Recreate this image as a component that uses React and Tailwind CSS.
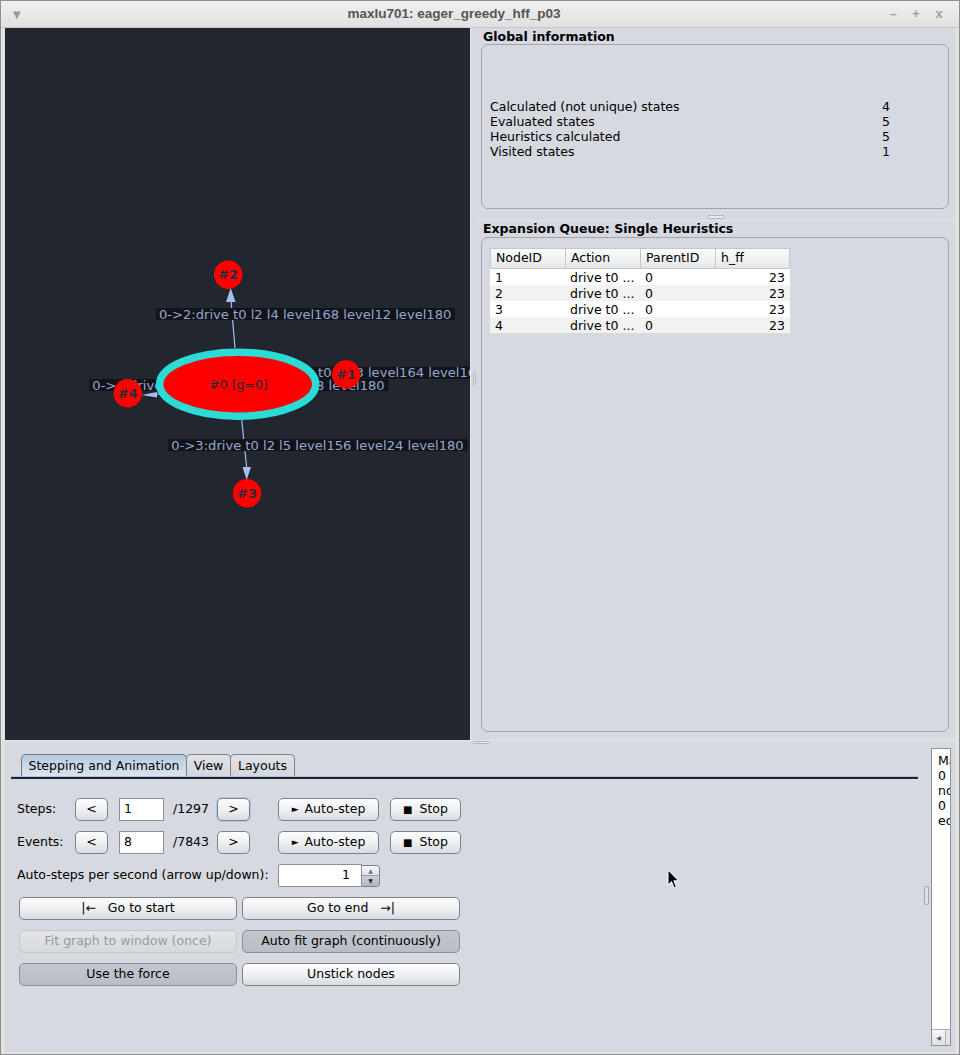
import React from "react";

const BTN =
  "flex items-center justify-center h-[23px] rounded-[5px] border border-[#7d8188] bg-linear-to-b from-[#fdfdfd] via-[#eef0f2] to-[#d8dbe0] text-[12.5px] text-black whitespace-pre shrink-0";
const BTN_TOGGLED =
  "flex items-center justify-center h-[23px] rounded-[5px] border border-[#8a8e95] bg-linear-to-b from-[#c3c7cd] to-[#b9bdc4] text-[12.5px] text-black whitespace-pre shrink-0";
const BTN_DISABLED =
  "flex items-center justify-center h-[23px] rounded-[5px] border border-[#c2c5ca] bg-linear-to-b from-[#e2e4e8] to-[#d6d9de] text-[12.5px] text-[#979ba2] whitespace-pre shrink-0";
const FIELD =
  "flex items-center h-[23px] bg-white border border-[#8d9197] text-[12.5px] text-black pl-[4px] shrink-0";

function Label({ x, y, text }) {
  return (
    <g>
      <rect x={x} y={y} width={299} height={12} fill="#121419" />
      <text
        x={x + 3}
        y={y + 10.5}
        fontSize="13.1"
        fill="#94a8cf"
        fontFamily="DejaVu Sans, sans-serif"
      >
        {text}
      </text>
    </g>
  );
}

function Node({ cx, cy, t }) {
  return (
    <g>
      <circle cx={cx} cy={cy} r={14.2} fill="#ff0000" />
      <text
        x={cx}
        y={cy + 4.6}
        fontSize="13"
        fontWeight="bold"
        textAnchor="middle"
        fill="#2a2d35"
        fontFamily="DejaVu Sans, sans-serif"
      >
        {t}
      </text>
    </g>
  );
}

function Graph() {
  return (
    <svg width="465" height="712" className="block">
      <g stroke="#a3c0ee" strokeWidth="1.2">
        <line x1="230" y1="320" x2="226" y2="273" />
        <line x1="236.7" y1="392" x2="241.7" y2="440" />
        <line x1="151" y1="366.5" x2="158" y2="365" />
        <line x1="308" y1="347" x2="316" y2="347" />
      </g>
      <g fill="#a3c0ee">
        <polygon points="225.7,260 221,274 230.5,274" />
        <polygon points="241.7,452 237.5,439 246,439" />
        <polygon points="136.7,367 152,364 152,369.5" />
        <polygon points="327,347 314,344.5 314,349.5" />
      </g>
      <Label x={151} y={280} text="0->2:drive t0 l2 l4 level168 level12 level180" />
      <Label x={163.3} y={411} text="0->3:drive t0 l2 l5 level156 level24 level180" />
      <Label x={236} y={338.7} text="0->1:drive t0 l2 l3 level164 level16 level180" />
      <Label x={84.3} y={351} text="0->4:drive t0 l2 l1 level148 level28 level180" />
      <ellipse
        cx="232.7"
        cy="356.2"
        rx="78"
        ry="32"
        fill="#ff0000"
        stroke="#2adbd6"
        strokeWidth="7.5"
      />
      <text
        x="233.5"
        y="360.5"
        fontSize="12.5"
        textAnchor="middle"
        fill="#262930"
        fontFamily="DejaVu Sans, sans-serif"
      >
        #0 [g=0]
      </text>
      <Node cx={223.2} cy={246.8} t="#2" />
      <Node cx={341.2} cy={346.5} t="#1" />
      <Node cx={122.8} cy={365.3} t="#4" />
      <Node cx={242} cy={465.3} t="#3" />
    </svg>
  );
}

function TitleBar() {
  return (
    <div className="h-[27px] flex items-center bg-linear-to-b from-[#f0f0f0] to-[#e0e0e0] border-b border-[#c8c8c8] shrink-0">
      <div className="w-[28px] pl-[12px] text-[10px] text-[#9a9a9a]">▼</div>
      <div className="flex-1 text-center font-['Liberation_Sans',sans-serif] font-bold text-[13.5px] text-[#555555]">
        maxlu701: eager_greedy_hff_p03
      </div>
      <div className="w-[80px] flex justify-end pr-[16px] gap-[15px] text-[13px] font-bold text-[#a0a0a0] font-['Liberation_Sans',sans-serif]">
        <span className="w-[8px] text-center">–</span>
        <span className="w-[8px] text-center">+</span>
        <span className="w-[8px] text-center">x</span>
      </div>
    </div>
  );
}

function RightPanel() {
  const rows = [
    ["Calculated (not unique) states", "4"],
    ["Evaluated states", "5"],
    ["Heuristics calculated", "5"],
    ["Visited states", "1"],
  ];
  const q = [
    ["1", "drive t0 ...", "0", "23"],
    ["2", "drive t0 ...", "0", "23"],
    ["3", "drive t0 ...", "0", "23"],
    ["4", "drive t0 ...", "0", "23"],
  ];
  return (
    <div className="flex-1 flex flex-col bg-[#d6d9df]">
      <div className="h-[16px] leading-[17px] pl-[7px] font-bold text-[12.5px]">
        Global information
      </div>
      <div className="ml-[5px] mr-[6px] h-[165px] rounded-[7px] border border-[#a1a5ac] flex items-center pl-[8px] pt-[4px]">
        <div className="grid grid-cols-[392px_auto] leading-[15px] text-[12.5px]">
          {rows.map(([a, b]) => (
            <React.Fragment key={a}>
              <span>{a}</span>
              <span>{b}</span>
            </React.Fragment>
          ))}
        </div>
      </div>
      <div className="h-[12px] flex flex-col items-center justify-end">
        <div className="w-[18px] h-[4px] rounded-[2px] border border-[#b4b8be] bg-[#e4e6ea]" />
        <div className="w-full h-[1px] bg-[#e2e4e8] mt-[1px]" />
      </div>
      <div className="h-[16px] leading-[16px] pl-[7px] font-bold text-[12.5px]">
        Expansion Queue: Single Heuristics
      </div>
      <div className="ml-[5px] mr-[6px] h-[495px] rounded-[7px] border border-[#a1a5ac] pl-[8px] pt-[10px]">
        <div className="w-[300px] text-[12.5px]">
          <div className="flex h-[21px] items-center bg-linear-to-b from-[#fcfcfd] to-[#e5e7ea] border border-[#c4c7cc]">
            {["NodeID", "Action", "ParentID", "h_ff"].map((h, i) => (
              <div
                key={h}
                className={
                  "h-full flex items-center pl-[5px] " +
                  (i < 3 ? "w-[75px] border-r border-[#c4c7cc]" : "flex-1")
                }
              >
                {h}
              </div>
            ))}
          </div>
          {q.map((r, i) => (
            <div
              key={r[0]}
              className={
                "flex h-[16px] leading-[17px] " +
                (i % 2 === 0 ? "bg-white" : "bg-[#f2f2f2]")
              }
            >
              <div className="w-[75px] pl-[5px]">{r[0]}</div>
              <div className="w-[75px] pl-[5px]">{r[1]}</div>
              <div className="w-[75px] pl-[5px]">{r[2]}</div>
              <div className="flex-1 text-right pr-[5px]">{r[3]}</div>
            </div>
          ))}
        </div>
      </div>
    </div>
  );
}

function StepRow({ label, value, total, focus }) {
  return (
    <div className="flex items-center h-[23px]">
      <span className="w-[58px] shrink-0">{label}</span>
      <div className={BTN + " w-[33px]"}>&lt;</div>
      <div className={FIELD + " ml-[11px] w-[45px]"}>{value}</div>
      <span className="ml-[9px] w-[44px] shrink-0">{total}</span>
      <div
        className={
          BTN +
          " w-[33px]" +
          (focus ? " border-[#6f9fd3] shadow-[0_0_0_1px_#a9c8ea]" : "")
        }
      >
        &gt;
      </div>
      <div className={BTN + " ml-[28px] w-[101px]"}>
        <span className="text-[9px] mr-[6px]">►</span>Auto-step
      </div>
      <div className={BTN + " ml-[11px] w-[71px]"}>
        <span className="text-[10px] mr-[7px]">■</span>Stop
      </div>
    </div>
  );
}

function BottomPanel() {
  return (
    <div className="flex-1 flex bg-[#d6d9df] text-[12.5px]">
      <div className="w-[919px] pl-[6px] pt-[10px]">
        <div className="w-[907px]">
          <div className="flex pl-[10px] h-[22px]">
            <div className="w-[166px] h-[22px] flex items-center justify-center pt-[1px] rounded-t-[5px] border border-b-0 border-[#6f7b89] bg-linear-to-b from-[#b7cbe0] to-[#dbe4ee]">
              Stepping and Animation
            </div>
            <div className="-ml-px w-[45px] h-[22px] flex items-center justify-center pt-[1px] rounded-t-[5px] border border-b-0 border-[#7d8188] bg-linear-to-b from-[#dfe2e6] to-[#d4d7dd]">
              View
            </div>
            <div className="-ml-px w-[65px] h-[22px] flex items-center justify-center pt-[1px] rounded-t-[5px] border border-b-0 border-[#7d8188] bg-linear-to-b from-[#dfe2e6] to-[#d4d7dd]">
              Layouts
            </div>
          </div>
          <div className="h-[1px] bg-[#a9c0da]" />
          <div className="h-[2px] bg-[#1f2631]" />
        </div>
        <div className="pl-[6px] pt-[19px] flex flex-col gap-[10px]">
          <StepRow label="Steps:" value="1" total="/1297" focus />
          <StepRow label="Events:" value="8" total="/7843" />
          <div className="flex items-center h-[23px]">
            <span className="w-[261px] shrink-0">
              Auto-steps per second (arrow up/down):
            </span>
            <div className={FIELD + " w-[84px] justify-end pr-[11px] rounded-l-[2px] h-[22px]"}>
              1
            </div>
            <div className="w-[18px] h-[22px] flex flex-col rounded-r-[4px] border border-l-0 border-[#7d8188] overflow-hidden">
              <div className="flex-1 flex items-center justify-center bg-linear-to-b from-[#f8f9fa] to-[#dfe2e6] border-b border-[#9a9ea4] text-[6px] text-[#6d7178]">
                ▲
              </div>
              <div className="flex-1 flex items-center justify-center bg-linear-to-b from-[#c9d0d9] to-[#aeb8c4] text-[6px] text-[#1f2630]">
                ▼
              </div>
            </div>
          </div>
          <div className="flex ml-[2px] gap-[5px]">
            <div className={BTN + " w-[218px]"}>{"|←   Go to start"}</div>
            <div className={BTN + " w-[218px]"}>{"Go to end   →|"}</div>
          </div>
          <div className="flex ml-[2px] gap-[5px]">
            <div className={BTN_DISABLED + " w-[218px]"}>Fit graph to window (once)</div>
            <div className={BTN_TOGGLED + " w-[218px]"}>Auto fit graph (continuously)</div>
          </div>
          <div className="flex ml-[2px] gap-[5px]">
            <div className={BTN_TOGGLED + " w-[218px]"}>Use the force</div>
            <div className={BTN + " w-[218px]"}>Unstick nodes</div>
          </div>
        </div>
      </div>
      <div className="w-[7px] pt-[142px]">
        <div className="w-[5px] h-[19px] rounded-[2px] border border-[#a4a8ae] bg-[#dfe1e5]" />
      </div>
      <div className="w-[20px] mt-[4px] mb-[6px] bg-white border border-[#8e9298] flex flex-col overflow-hidden">
        <div className="flex-1 pl-[6px] pt-[4px] leading-[15px] whitespace-nowrap overflow-hidden">
          <div>Max open list</div>
          <div>0</div>
          <div>nodes</div>
          <div>0</div>
          <div>edges</div>
        </div>
        <div className="h-[16px] border-t border-[#a9adb3] bg-[#e3e5e8] flex">
          <div className="w-[14px] h-full flex items-center justify-center border-r border-[#b3b7bc] bg-linear-to-b from-[#f6f7f8] to-[#dcdfe3] text-[6px] text-[#555]">
            ◀
          </div>
        </div>
      </div>
    </div>
  );
}

export default function App() {
  return (
    <div className="w-[960px] h-[1055px] relative overflow-hidden bg-[#e2e2e2] border border-[#8e8e8e] flex flex-col font-['DejaVu_Sans',sans-serif] text-[12.5px] text-black">
      <TitleBar />
      <div className="flex-1 flex flex-col pl-[4px] pr-[4px] pb-[2px]">
        <div className="h-[712px] flex shrink-0">
          <div className="w-[465px] h-full bg-[#21262f] overflow-hidden shrink-0">
            <Graph />
          </div>
          <div className="w-[6px] h-full bg-[#d6d9df] flex items-center pl-[2px] border-l border-[#e6e8eb]">
            <div className="w-[3px] h-[16px] mt-[-10px] rounded-[2px] border border-[#b3b7bd] bg-[#e5e7ea]" />
          </div>
          <RightPanel />
        </div>
        <div className="h-[4px] bg-[#d6d9df] pl-[467px] flex items-center border-t border-[#e3e5e8]">
          <div className="w-[18px] h-[3px] rounded-[2px] border border-[#b3b7bd] bg-[#e5e7ea]" />
        </div>
        <BottomPanel />
      </div>
      <svg
        className="absolute left-[666px] top-[868px]"
        width="13"
        height="21"
        viewBox="0 0 13 21"
      >
        <path
          d="M1 1 L1 16 L4.5 12.6 L7.2 19 L9.4 18 L6.8 11.8 L11.5 11.8 Z"
          fill="#000"
          stroke="#fff"
          strokeWidth="1"
          strokeLinejoin="round"
        />
      </svg>
    </div>
  );
}
